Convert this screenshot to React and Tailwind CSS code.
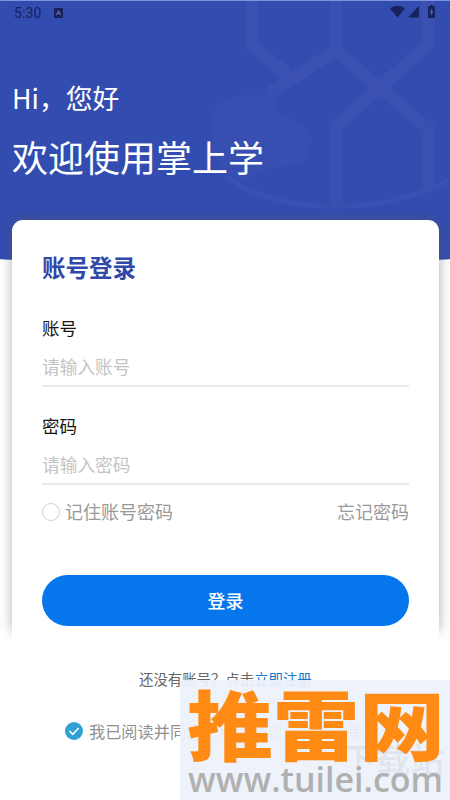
import { useState } from 'react';

const campos = [
  { id: 'account', label: '账号', placeholder: '请输入账号', type: 'text', className: '' },
  { id: 'password', label: '密码', placeholder: '请输入密码', type: 'password', className: 'mt-[26px]' },
];

function StatusBar() {
  return (
    <div className="relative flex h-[25px] items-center border-t border-[#7d94e0] pl-[14px] pr-[14px] text-[#17225f]">
      <span className="font-[Roboto] text-[14px] leading-none tracking-[0.1px]">5:30</span>
      <svg className="ml-[13px] h-[10px] w-[9px]" viewBox="0 0 9 10">
        <rect width="9" height="10" rx="1" fill="currentColor" />
        <path d="M2.3 7.2 4.5 2.8 6.7 7.2M3.4 5.6h2.2" fill="none" stroke="#8090cf" strokeWidth="0.8" />
      </svg>
      <svg className="ml-auto -mt-[3px] h-[13px] w-[46px]" viewBox="0 0 46 13" fill="currentColor">
        <path d="M0 3.4C4.3-.1 10.7-.1 15 3.4L7.5 12.5z" />
        <path d="M29 1v11.500H18z" />
        <path d="M38 1.500h2V0h3v1.500h2V13h-7z" />
        <path d="M42 3.500 39.800 7.500h1.400V11l2-4.500H42z" fill="#5468b8" />
      </svg>
    </div>
  );
}

function HeaderPattern() {
  return (
    <svg className="absolute inset-0 h-full w-full" viewBox="0 0 450 260" fill="none">
      <g stroke="#3a51b2" strokeWidth="13">
        <path d="M252 0v45l36 29" />
        <path d="M336 0v50l-67 43" />
        <path d="M336 50l92 78v62" />
        <path d="M428 0v44l-92 82v80" />
      </g>
      <path
        d="M213 150V112c4-14 24-20 52-18l10-6c-4 18-2 26 8 28 16 1 28 10 28 25 0 17-12 26-30 25-14-1-24 8-36 14-16-4-28-14-32-30z"
        fill="#384fb2"
      />
      <path d="M226 176c50 38 150 42 224 3" stroke="#3a51b2" strokeWidth="5" />
    </svg>
  );
}

function Watermark() {
  return (
    <div className="absolute bottom-0 right-0 h-[120px] w-[270px] overflow-hidden bg-[#edf2fb]/93">
      <span className="absolute left-[162px] top-[57px] whitespace-nowrap text-[34px] font-medium leading-[44px] text-[#e0e5ec]">
        下载站
      </span>
      <p className="absolute left-[7px] top-[-1px] origin-center scale-y-88 whitespace-nowrap text-[86px] font-black leading-[86px] text-[#ff8a14]">
        推雷网
      </p>
      <p className="absolute left-[8px] top-[79px] whitespace-nowrap font-['Open_Sans'] text-[34px] font-semibold leading-[40px] text-[#b0b0b0]">
        www.tuilei.com
      </p>
    </div>
  );
}

export default function App() {
  const [remember, setRemember] = useState(false);
  const [agreed, setAgreed] = useState(true);

  return (
    <div className="relative h-[800px] w-[450px] overflow-hidden bg-white font-['Noto_Sans_CJK_SC',sans-serif]">
      <header className="relative h-[261px] overflow-hidden rounded-b-[50%_2px] bg-[#334cb0] text-white">
        <HeaderPattern />
        <StatusBar />
        <div className="relative pl-3">
          <p className="mt-[53px] text-[26.800px] leading-[40px]">Hi，您好</p>
          <h1 className="mt-[12px] text-[36px] leading-[52px]">欢迎使用掌上学</h1>
        </div>
      </header>

      <main className="relative mx-3 -mt-[41px] mr-[11px] h-[410px] rounded-t-[11px] bg-white px-[30px] pt-[29px] shadow-[0_0_12px_rgba(90,90,90,0.5)]">
        <h2 className="text-[23.500px] font-bold leading-[36px] text-[#3048a8]">账号登录</h2>
        <form className="mt-[30px]" onSubmit={(e) => e.preventDefault()}>
          {campos.map((campo) => (
            <div key={campo.id} className={campo.className}>
              <label htmlFor={campo.id} className="block text-[17.500px] leading-[26px] text-[#151515]">
                {campo.label}
              </label>
              <input
                id={campo.id}
                type={campo.type}
                placeholder={campo.placeholder}
                className="block h-[46px] w-full border-b-2 border-[#e9e9e9] pt-[5px] text-[17.700px] outline-none placeholder:text-[#c4c4c4]"
              />
            </div>
          ))}
          <div className="mt-[13px] flex items-center justify-between text-[18px] leading-[27px] text-[#999]">
            <button type="button" className="flex items-center gap-[5px]" onClick={() => setRemember(!remember)}>
              <span className={`h-[18px] w-[18px] rounded-full border ${remember ? 'border-[#0676ed] bg-[#0676ed]' : 'border-[#d2d2d2]'}`} />
              记住账号密码
            </button>
            <button type="button">忘记密码</button>
          </div>
          <button type="submit" className="mt-[50px] h-[51px] w-full rounded-full bg-[#0676ed] text-[18px] font-medium text-white">
            登录
          </button>
        </form>
      </main>

      <footer className="relative ml-3 mr-[11px] -mt-[3px] h-[174px] bg-white pt-[40px]">
        <p className="pl-[127px] text-[14.400px] leading-[24px] text-[#666]">
          还没有账号？点击<a className="text-[#1579c9]" href="#register">立即注册</a>
        </p>
        <button
          type="button"
          className="ml-[53px] mt-[28px] flex items-center gap-[6px] whitespace-nowrap text-[16.200px] leading-[24px] text-[#909090]"
          onClick={() => setAgreed(!agreed)}
        >
          <svg className="h-[18px] w-[18px]" viewBox="0 0 18 18" fill="none">
            <circle cx="9" cy="9" r="9" fill="#31a0d2" />
            {agreed && <path d="m4.500 9 3.200 3.300 6-6.300" stroke="white" strokeWidth="1.500" />}
          </svg>
          我已阅读并同意《用户协议与隐私政策》
        </button>
      </footer>

      <Watermark />
    </div>
  );
}
